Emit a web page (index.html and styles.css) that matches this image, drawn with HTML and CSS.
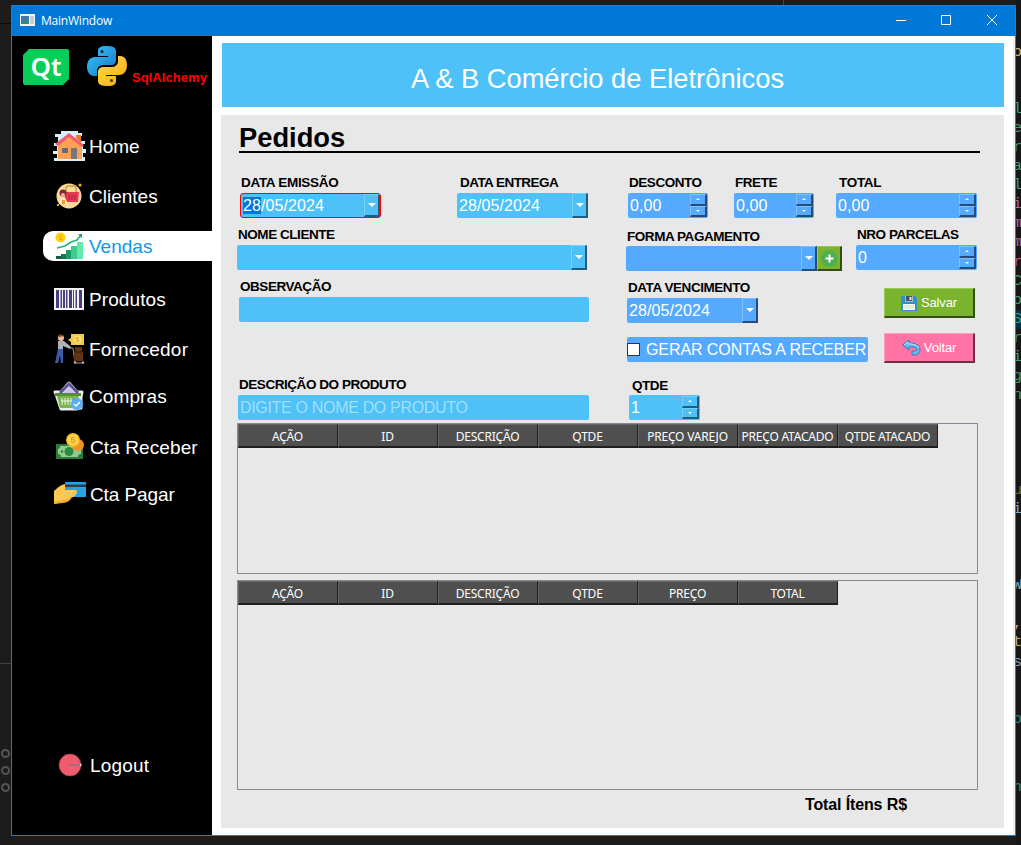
FILE: index.html
```html
<!DOCTYPE html>
<html lang="pt-BR">
<head>
<meta charset="utf-8">
<title>MainWindow</title>
<link rel="stylesheet" href="styles.css">
</head>
<body>
<div class="desktop">
  <div class="gutter">
    <span class="rule rule-top"></span>
    <span class="rule rule-mid"></span>
    <span class="ring ring-first"></span><span class="ring"></span><span class="ring"></span>
  </div>
  <div class="editor-top"></div>
  <div class="code">
    <i class="tan">o</i><i></i><i></i><i>l</i><i>e</i><i>r</i><i>a</i><i>l</i><i class="pink">i</i><i class="pink">m</i><i class="pink">m</i><i class="pink">r</i><i>C</i><i>o</i><i class="sel">S</i><i>r</i><i>i</i><i>g</i><i>n</i><i></i><i></i><i></i><i></i><i class="olive">u</i><i class="blue">i</i><i></i><i></i><i></i><i class="blue">W</i><i></i><i class="tan">,</i><i class="tan">t</i><i class="blue">s</i><i></i><i></i><i class="teal">b</i><i></i><i></i><i class="teal late">h</i>
  </div>

  <div class="window">
    <header class="titlebar">
      <svg class="app-icon" viewBox="0 0 15 12"><rect width="15" height="12" fill="#f4f4f4"/><rect x="1" y="2" width="8" height="8" fill="#2f8a78"/><path d="M1 2h8v3L1 9z" fill="#4778ad"/><rect x="10" y="2" width="4" height="8" fill="#c7ced3"/></svg>
      <span class="caption">MainWindow</span>
      <svg class="controls" viewBox="0 0 104 12" fill="none" stroke="#fff"><path d="M0 6.5h10M45.500 1.500h9v9h-9z"/><path d="M91 1l10 10M101 1l-10 10"/></svg>
    </header>
    <div class="content">
      <aside class="sidebar">
        <div class="brand">
          <svg class="qt" viewBox="0 0 46 36"><path d="M6 0h38q2 0 2 2v28l-6 6H2q-2 0-2-2V6z" fill="#07ce58"/><text x="23" y="27" text-anchor="middle" class="qt-text">Qt</text></svg>
          <svg class="python" viewBox="0 0 40 40"><defs><linearGradient id="pb" x1="0" y1="0" x2="1" y2="1"><stop stop-color="#39c4fa"/><stop offset="1" stop-color="#1678c5"/></linearGradient><linearGradient id="py" x1="0" y1="0" x2="1" y2="1"><stop stop-color="#ffdf5d"/><stop offset="1" stop-color="#f3a80b"/></linearGradient></defs>
          <path d="M19 0c-6 0-8 2-8 5v5h10v1H8c-5 0-8 4-8 10 0 5 3 9 7 9h3v-5c0-4 3-6 7-6h7c3 0 5-2 5-5V5c0-4-4-5-10-5z" fill="url(#pb)"/><path d="M21 40c6 0 8-2 8-5v-5H19v-1h13c5 0 8-4 8-10 0-6-3-9-7-9h-2v5c0 4-3 6-7 6h-7c-4 0-6 2-6 5v9c0 4 4 5 10 5z" fill="url(#py)"/><circle cx="15" cy="5.500" r="1.500" fill="#123"/><circle cx="24.500" cy="34.500" r="1.500" fill="#543400"/></svg>
          <span class="sqlalchemy">SqlAlchemy</span>
        </div>
        <nav class="menu">
          <a class="item"><svg class="icon" viewBox="0 0 33 32"><path d="M8 1h17v2h4v3h-3v5h6v3h-2v5h3v4h-3v4h2v4H1v-3h3v-4H0v-3h4v-5H1v-3h4V7H2V4h6z" fill="#d9f0fb"/><path d="M5 14L17 4l12 11v14H5z" fill="#ffa052"/><path d="M23 5h5v8l-5-5z" fill="#e77936"/><path d="M2 14L16 3l15 12-2 2L16 7 5 16z" fill="#f15b74"/><rect x="9" y="18" width="6" height="5" fill="#666c75"/><rect x="18" y="18" width="6" height="11" fill="#76777c"/></svg><span>Home</span></a>
          <a class="item clientes"><svg class="icon" viewBox="0 0 33 32"><circle cx="16" cy="16" r="12.500" fill="#fbd99b"/><circle cx="27" cy="5" r="1.600" fill="#f6b100"/><circle cx="5" cy="25" r="1.200" fill="#f6a020"/><path d="M13 12V8q0-2 2-2h6q2 0 2 2v4" fill="none" stroke="#c99a43" stroke-width="1.500"/><path d="M11 12h15l-1 10H13z" fill="#e43b55"/><path d="M16 15v5m3-5v5m3-5v5" stroke="#ae1838"/><circle cx="10" cy="13" r="3.500" fill="#7b2833"/><circle cx="10" cy="15" r="2" fill="#f2b092"/><path d="M6 24q0-6 4-6t4 6z" fill="#fff1dc"/><path d="M9 20h3v4H9z" fill="#f99a24"/></svg><span>Clientes</span></a>
          <a class="item active"><svg class="icon" viewBox="0 0 33 32"><circle cx="7.500" cy="7.500" r="5" fill="#ffcf0b"/><text x="7.500" y="10" text-anchor="middle" class="coin-text">1</text><path d="M4 18l8-2 6-4 6-2 4-5" fill="none" stroke="#23b778" stroke-width="1.700"/><path d="M25 4h4v4z" fill="#209c68"/><path d="M3 26h5v3H3z" fill="#185b3e"/><path d="M8 24h5v5H8z" fill="#16784e"/><path d="M13 20h5v9h-5z" fill="#199b63"/><path d="M18 16h6v13h-6z" fill="#38ce8c"/><path d="M24 12h6v17h-6z" fill="#64e9ad"/></svg><span>Vendas</span></a>
          <a class="item produtos"><svg class="icon" viewBox="0 0 33 32"><rect x="1" y="5" width="30" height="22" fill="#f5f4f7"/><path d="M3 7h3v18H3zm5 0h1v18H8zm2 0h2v18h-2zm3 0h1v18h-1zm3 0h3v18h-3zm4 0h1v18h-1zm3 0h1v18h-1zm3 0h3v18h-3z" fill="#463f7c"/><path d="M7 7h1v18H7zm7 0h1v18h-1zm8 0h1v18h-1z" fill="#a49bc9"/></svg><span>Produtos</span></a>
          <a class="item fornecedor"><svg class="icon" viewBox="0 0 33 32"><circle cx="8" cy="5" r="3" fill="#eebc9b"/><path d="M5 2q4-2 6 1l-5 1z" fill="#73442e"/><path d="M5 8h6l7 6-1 2-7-3v4H5z" fill="#afb2b8"/><path d="M5 16h5v14H8l-1-8-2 8H2z" fill="#3d5da8"/><path d="M18 1h13v11H18V9l-3-2 3-2z" fill="#f1c847"/><circle cx="24.500" cy="6.500" r="4" fill="#ffe078"/><text x="24.500" y="9" text-anchor="middle" class="coin-text">$</text><path d="M17 15h3l2 15h9" fill="none" stroke="#999"/><path d="M22 14h7v5h1v9h-9v-9h1z" fill="#613417"/><path d="M21 19h9" stroke="#36200f"/><circle cx="22" cy="29.500" r="1.300" fill="#aaa"/><circle cx="30" cy="29.500" r="1.300" fill="#aaa"/></svg><span>Fornecedor</span></a>
          <a class="item compras"><svg class="icon" viewBox="0 0 33 32"><path d="M16 3l8 9h5l-1 5v11l-5 1H8L4 17l-2-5h6z" fill="#eee" stroke="#eee" stroke-width="3" stroke-linejoin="round"/><path d="M7 13l9-9 9 9" fill="none" stroke="#5b529a" stroke-width="3"/><path d="M10 13l6-6 6 6z" fill="#c8c5dd"/><path d="M2 13h26v3H2z" fill="#588c3d"/><path d="M4 16h22l-3 12H7z" fill="#79b551"/><path d="M9 18v7m3-7v7m3-7v7m3-7v7M8 21h12" stroke="#eef6e9"/><circle cx="24" cy="24" r="6" fill="#58adf6"/><path d="M21 24l2 2 4-4" fill="none" stroke="#fff" stroke-width="1.500"/></svg><span>Compras</span></a>
          <a class="item receber"><svg class="icon" viewBox="0 0 33 32"><rect x="3" y="13" width="27" height="15" fill="#2e7c3b"/><path d="M7 15h18q0 3 3 3v5q-3 0-3 3H8q0-3-3-3v-5q2 0 2-3z" fill="#91cd91"/><circle cx="16" cy="20.500" r="4.500" fill="#2e8a40"/><circle cx="9" cy="20.500" r="1.300" fill="#2e8a40"/><circle cx="25" cy="14" r="6" fill="#f59122"/><circle cx="20" cy="9" r="7" fill="#f6b91e"/><circle cx="20" cy="9" r="5.500" fill="#ffd653"/><text x="20" y="12" text-anchor="middle" class="five">5</text></svg><span>Cta Receber</span></a>
          <a class="item pagar"><svg class="icon" viewBox="0 0 33 32"><rect x="12" y="4" width="21" height="15" rx="1" fill="#27a4e6"/><path d="M12 6.500h21v2.500H12z" fill="#263f52"/><path d="M1 13q6-6 11-7v6h8q4-1 4 2-1 5-7 6-3 3-7 4l-9 2z" fill="#ffc852"/><path d="M1 24l9-2q5 0 9-4-1 6-9 7l-9 1z" fill="#efae32"/></svg><span>Cta Pagar</span></a>
          <a class="item logout"><svg class="icon" viewBox="0 0 33 32"><circle cx="17" cy="16" r="11" fill="#f05c6d" stroke="#96404d" stroke-width=".7"/><path d="M16 16h11" fill="none" stroke="#8c7580" stroke-width="1.500"/><path d="M27 14l2 2-2 2z" fill="#c8c8ca"/></svg><span>Logout</span></a>
        </nav>
      </aside>

      <main class="main">
        <h1 class="banner">A &amp; B Comércio de Eletrônicos</h1>
        <section class="panel">
          <h2 class="heading">Pedidos</h2>
          <div class="form">
            <div class="left">
              <div class="row">
                <div class="field emissao"><label>DATA EMISSÃO</label><div class="box focus"><span class="value"><mark>28</mark>/05/2024</span><b class="drop"></b></div></div>
                <div class="field entrega"><label>DATA ENTREGA</label><div class="box"><span class="value">28/05/2024</span><b class="drop"></b></div></div>
              </div>
              <div class="field cliente"><label>NOME CLIENTE</label><div class="box"><b class="drop"></b></div></div>
              <div class="field observacao"><label>OBSERVAÇÃO</label><div class="box"></div></div>
              <div class="field descricao"><label>DESCRIÇÃO DO PRODUTO</label><div class="box"><span class="placeholder">DIGITE O NOME DO PRODUTO</span></div></div>
            </div>
            <div class="right">
              <div class="row">
                <div class="field money desconto"><label>DESCONTO</label><div class="box deep"><span class="value">0,00</span><b class="spin"><i></i><i></i></b></div></div>
                <div class="field money frete"><label>FRETE</label><div class="box deep"><span class="value">0,00</span><b class="spin"><i></i><i></i></b></div></div>
                <div class="field total"><label>TOTAL</label><div class="box deep"><span class="value">0,00</span><b class="spin"><i></i><i></i></b></div></div>
              </div>
              <div class="row payment">
                <div class="field forma"><label>FORMA PAGAMENTO</label><div class="box deep"><b class="drop"></b></div></div>
                <button class="add"><svg viewBox="0 0 17 17"><circle cx="8.500" cy="8.500" r="8.200" fill="#4caf50"/><path d="M8.500 4.500v8M4.500 8.500h8" stroke="#fff" stroke-width="2"/></svg></button>
                <div class="field parcelas"><label>NRO PARCELAS</label><div class="box deep"><span class="value">0</span><b class="spin"><i></i><i></i></b></div></div>
              </div>
              <div class="row">
                <div class="due">
                  <div class="field vencimento"><label>DATA VENCIMENTO</label><div class="box deep"><span class="value">28/05/2024</span><b class="drop"></b></div></div>
                  <div class="box deep check"><span class="tick"></span><span class="check-text">GERAR CONTAS A RECEBER</span></div>
                </div>
                <div class="actions">
                  <button class="btn save"><svg viewBox="0 0 16 16"><path d="M0 1h14l2 2v13H1L0 15z" fill="#2d91cb"/><path d="M4 1h8v6H4z" fill="#aeb8c1"/><path d="M5 1h6v5H5z" fill="#465662"/><path d="M8.500 2h2v3h-2z" fill="#dfe5ea"/><path d="M2 9h12v6H2z" fill="#fafafa"/><path d="M3 11h10M3 13h10" stroke="#d0d8df"/></svg>Salvar</button>
                  <button class="btn back"><svg viewBox="0 0 19 17"><path d="M.7 6L7 1v3h3q8 1 8 7 0 5-6 5h-2v-4h2q3 0 3-2 0-2-5-2H7v3z" fill="#65b6f2" stroke="#3979b8" stroke-width="1"/><path d="M2 6l4-3v2h4q6 1 7 4" stroke="#b8e2ff" fill="none"/></svg>Voltar</button>
                </div>
              </div>
              <div class="field qtde"><label>QTDE</label><div class="box"><span class="value">1</span><b class="spin"><i></i><i></i></b></div></div>
            </div>
          </div>
          <div class="table products"><div class="head"><span>AÇÃO</span><span>ID</span><span>DESCRIÇÃO</span><span>QTDE</span><span>PREÇO VAREJO</span><span>PREÇO ATACADO</span><span>QTDE ATACADO</span></div></div>
          <div class="table items"><div class="head"><span>AÇÃO</span><span>ID</span><span>DESCRIÇÃO</span><span>QTDE</span><span>PREÇO</span><span>TOTAL</span></div></div>
          <p class="sum">Total Ítens R$</p>
        </section>
      </main>
    </div>
  </div>
</div>
</body>
</html>
```
FILE: styles.css
```css
* { box-sizing: border-box; }
body { margin: 0; font-family: "Liberation Sans", Arial, sans-serif; }
h1, h2, p { margin: 0; }
button { padding: 0; font-family: inherit; }

/* Editor behind the window */
.desktop { position: relative; width: 1021px; height: 845px; overflow: hidden; background: #1c1c1c; display: flex; }
.gutter { width: 11px; display: flex; flex-direction: column; }
.rule { height: 1px; }
.rule-top { margin-top: 23px; background: #0b0b0b; }
.rule-mid { margin-top: 639px; background: #424242; }
.ring { width: 9px; height: 9px; margin: 0 0 8px 1px; border: 2px solid #555; border-radius: 50%; flex: none; }
.ring-first { margin-top: 85px; }
.editor-top { width: 1px; height: 5px; background: #444; margin-left: 772px; }
.code { width: 5px; margin-left: auto; padding-top: 43px; overflow: hidden; font-family: "Liberation Mono", monospace; font-size: 15px; color: #36a37d; background: #171717; }
.code i { display: block; height: 19.050px; line-height: 19px; font-style: normal; text-indent: -3px; }
.code .tan { color: #c5b878; }
.code .pink { color: #b964a0; }
.code .olive { color: #5d7939; }
.code .blue { color: #78aac8; }
.code .teal { color: #1e8b9c; }
.code .sel { background: #04304a; }
.code .late { margin-top: 11px; }

.window { position: absolute; left: 11px; top: 5px; width: 1005px; height: 831px; border: 1px solid #1780d5; background: #fff; display: flex; flex-direction: column; }
.titlebar { height: 30px; background: #0078d7; display: flex; align-items: center; padding: 0 15px 2px 8px; }
.app-icon { width: 15px; height: 12px; }
.caption { margin-left: 6px; font: 12px "Open Sans", sans-serif; letter-spacing: -.22px; color: #fff; }
.controls { width: 104px; height: 12px; margin-left: auto; }
.content { flex: 1; display: flex; border-right: 2px solid #f0f0f0; }

.sidebar { width: 200px; background: #000; }
.brand { height: 95px; display: flex; align-items: flex-start; padding: 10px 0 0 11px; }
.qt { width: 46px; height: 36px; margin-top: 3px; }
.qt-text { font: 600 26px "Noto Sans", sans-serif; fill: #fff; }
.python { width: 40px; height: 40px; margin-left: 18px; }
.sqlalchemy { margin: 24px 0 0 5px; font-size: 13px; line-height: 15px; font-weight: bold; letter-spacing: .05px; color: #f00; }
.menu { display: flex; flex-direction: column; }
.item { height: 30px; margin: 0 0 20px 31px; padding-left: 10px; display: flex; align-items: center; gap: 3px; font-size: 19px; color: #fff; border-radius: 10px 0 0 10px; }
.item span { padding-top: 2px; }
.icon { width: 33px; height: 32px; flex: none; }
.active { background: #fff; color: #0e98e8; margin-bottom: 23px; }
.fornecedor { margin-bottom: 17px; letter-spacing: .2px; }
.compras { margin-bottom: 21px; letter-spacing: .1px; }
.produtos { letter-spacing: .1px; }
.receber { margin-bottom: 17px; gap: 4px; letter-spacing: .1px; }
.pagar { margin-bottom: 241px; gap: 4px; letter-spacing: -.1px; }
.logout { gap: 4px; letter-spacing: .2px; }
.coin-text { font-size: 7px; fill: #d99b00; }
.five { font-size: 9px; font-weight: bold; fill: #e79a15; }

.main { flex: 1; padding: 7px 9px 0 9px; }
.banner { height: 64px; margin-left: 1px; background: #4fc1f9; color: #fff; font-weight: normal; font-size: 27.300px; line-height: 71px; text-align: center; padding-right: 31px; }
.panel { height: 713px; margin-top: 8px; padding-left: 16px; background: #e8e8e8; display: flex; flex-direction: column; align-items: flex-start; }
.heading { width: 741px; height: 38px; margin: 0 0 13px 2px; border-bottom: 2px solid #000; font-size: 27.300px; line-height: 45px; }

.form { display: flex; height: 257px; }
.left { width: 389px; }
.right { flex: 1; }
.row { display: flex; align-items: flex-start; }
.field label { display: block; height: 27px; padding: 9px 0 0 1px; font-size: 13.500px; line-height: 16px; font-weight: bold; letter-spacing: -.450px; white-space: nowrap; }
.box { --fill: #4fc1f9; --light: #72d0fc; --dark: #235c7c; height: 25px; border-radius: 2px; background: var(--fill); color: #fff; font-size: 16px; display: flex; align-items: center; padding-left: 2px; }
.value { letter-spacing: .08px; }
.deep { --fill: #55aaff; --light: #7dbfff; --dark: #234e7a; }
.focus { border: 1px solid #f00; border-radius: 3px; padding-left: 2px; }
mark { background: #0078d7; color: #fff; }
.placeholder { color: #a2dffb; letter-spacing: -.320px; }
.drop { width: 16px; height: 100%; margin-left: auto; border: solid; border-width: 1px 2px 2px 1px; border-color: var(--light) var(--dark) var(--dark) var(--light); display: flex; align-items: center; justify-content: center; }
.drop::after { content: ""; border: solid transparent; border-width: 4px 4px 0; border-top-color: #fff; }
.spin { width: 17px; height: 23px; margin: 0 1px 0 auto; display: flex; flex-direction: column; }
.spin i { flex: 1; border: solid; border-width: 1px 2px 2px 1px; border-color: var(--light) var(--dark) var(--dark) var(--light); display: flex; align-items: center; justify-content: center; }
.spin i::after { content: ""; border: solid transparent; border-width: 0 2px 2px; border-bottom-color: #fff; }
.spin i + i::after { border-width: 2px 2px 0; border-top-color: #fff; }

.emissao { width: 141px; margin-left: 3px; }
.emissao label { letter-spacing: -.300px; }
.entrega { width: 131px; margin-left: 76px; }
.entrega label { padding-left: 3px; letter-spacing: -.550px; }
.cliente { width: 350px; }
.observacao { width: 350px; margin-left: 2px; }
.descricao { width: 351px; margin: 46px 0 0 1px; }
.money { width: 80px; }
.desconto { margin-left: 2px; }
.frete { margin-left: 26px; }
.total { width: 141px; margin-left: 22px; }
.total label { padding-left: 3px; letter-spacing: -.300px; }
.payment { height: 53px; }
.forma { width: 191px; margin-top: 1px; }
.forma label { padding-top: 10px; }
.add { width: 25px; height: 25px; margin-top: 28px; background: #7ab32e; border: solid; border-width: 1px 2px 2px 1px; border-color: #98ca57 #344d15 #344d15 #98ca57; display: flex; align-items: center; justify-content: center; }
.add svg { width: 17px; height: 17px; flex: none; }
.parcelas { width: 121px; margin-left: 14px; }
.due { width: 258px; padding-left: 1px; }
.vencimento { width: 131px; }
.check { width: 241px; margin-top: 14px; padding: 0; }
.tick { width: 13px; height: 13px; background: #fff; border: 1px solid #333; }
.check-text { margin-left: 6px; letter-spacing: -.080px; white-space: nowrap; }
.actions { display: flex; flex-direction: column; gap: 15px; padding-top: 17px; }
.btn { width: 91px; height: 30px; border: solid; border-width: 1px 2px 2px 1px; color: #fff; font-size: 13px; letter-spacing: -.150px; display: flex; align-items: center; justify-content: center; gap: 4px; }
.save { background: #7ab32e; border-color: #98ca57 #344d15 #344d15 #98ca57; }
.save svg { width: 16px; height: 16px; }
.back { background: #ff74a4; border-color: #ff9fc0 #702f46 #702f46 #ff9fc0; gap: 3px; }
.back svg { width: 19px; height: 17px; }
.qtde { width: 71px; margin: 5px 0 0 3px; }
.qtde label { padding: 10px 0 0 3px; }

.table { width: 741px; border: 1px solid #858993; }
.products { height: 151px; }
.items { height: 210px; margin-top: 6px; }
.head { display: flex; height: 24px; }
.head span { width: 100px; padding-right: 1px; background: #4f4f4f; border: solid; border-width: 1px 1px 2px 1px; border-color: #666 #1e1e1e #1e1e1e #666; color: #fff; font: 12px/24px "Noto Sans", sans-serif; letter-spacing: -.200px; text-align: center; white-space: nowrap; }
.sum { margin: 6px 0 0 568px; font-size: 16px; line-height: 18px; font-weight: bold; letter-spacing: -.130px; }
```
